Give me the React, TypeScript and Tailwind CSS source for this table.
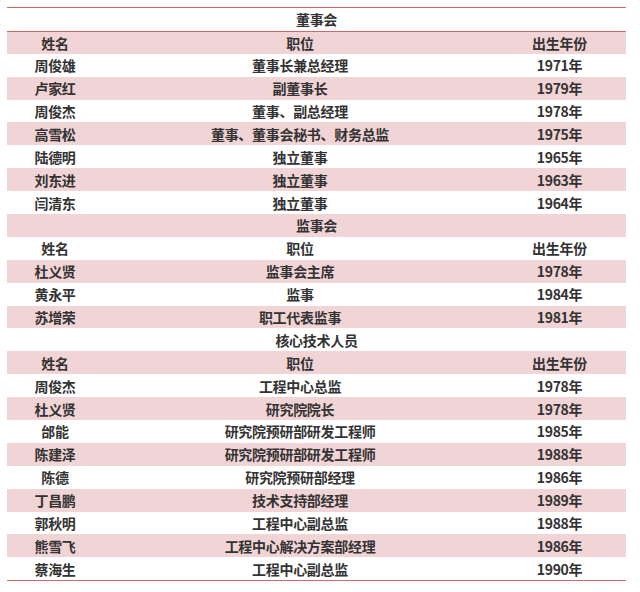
import React from "react";

type Row = { kind: "title"; text: string } | { kind: "header" } | { kind: "data"; name: string; pos: string; year: string };

const rows: Row[] = [
  { kind: "title", text: "董事会" },
  { kind: "header" },
  { kind: "data", name: "周俊雄", pos: "董事长兼总经理", year: "1971年" },
  { kind: "data", name: "卢家红", pos: "副董事长", year: "1979年" },
  { kind: "data", name: "周俊杰", pos: "董事、副总经理", year: "1978年" },
  { kind: "data", name: "高雪松", pos: "董事、董事会秘书、财务总监", year: "1975年" },
  { kind: "data", name: "陆德明", pos: "独立董事", year: "1965年" },
  { kind: "data", name: "刘东进", pos: "独立董事", year: "1963年" },
  { kind: "data", name: "闫清东", pos: "独立董事", year: "1964年" },
  { kind: "title", text: "监事会" },
  { kind: "header" },
  { kind: "data", name: "杜义贤", pos: "监事会主席", year: "1978年" },
  { kind: "data", name: "黄永平", pos: "监事", year: "1984年" },
  { kind: "data", name: "苏增荣", pos: "职工代表监事", year: "1981年" },
  { kind: "title", text: "核心技术人员" },
  { kind: "header" },
  { kind: "data", name: "周俊杰", pos: "工程中心总监", year: "1978年" },
  { kind: "data", name: "杜义贤", pos: "研究院院长", year: "1978年" },
  { kind: "data", name: "邰能", pos: "研究院预研部研发工程师", year: "1985年" },
  { kind: "data", name: "陈建泽", pos: "研究院预研部研发工程师", year: "1988年" },
  { kind: "data", name: "陈德", pos: "研究院预研部经理", year: "1986年" },
  { kind: "data", name: "丁昌鹏", pos: "技术支持部经理", year: "1989年" },
  { kind: "data", name: "郭秋明", pos: "工程中心副总监", year: "1988年" },
  { kind: "data", name: "熊雪飞", pos: "工程中心解决方案部经理", year: "1986年" },
  { kind: "data", name: "蔡海生", pos: "工程中心副总监", year: "1990年" },
];

export default function App() {
  return (
    <div
      className="w-[640px] h-[592px] bg-white pt-[7px] pl-[7px] pr-[14px] text-[14px] text-[#333333]"
      style={{ fontFamily: '"Noto Sans CJK SC", "Noto Sans", sans-serif' }}
    >
      <div className="border-t-[1.5px] border-b-[1.5px] border-[#cf6a6a] flex flex-col">
        {rows.map((r, i) => {
          const bg = i % 2 === 1 ? "bg-[#f1d4d5]" : "bg-white";
          const line = i === 1 ? "border-t-[1.5px] border-[#cf6a6a]" : "";
          if (r.kind === "title") {
            return (
              <div key={i} className={`h-[22.9px] flex items-center justify-center font-bold tracking-[-0.3px] leading-none ${bg} ${line}`}>
                {r.text}
              </div>
            );
          }
          const name = r.kind === "header" ? "姓名" : r.name;
          const pos = r.kind === "header" ? "职位" : r.pos;
          const year = r.kind === "header" ? "出生年份" : r.year;
          return (
            <div key={i} className={`h-[22.9px] grid grid-cols-[96px_394px_1fr] items-center font-bold tracking-[-0.3px] leading-none ${bg} ${line}`}>
              <div className="text-center">{name}</div>
              <div className="text-center">{pos}</div>
              <div className="text-center pr-[4px]">{year}</div>
            </div>
          );
        })}
      </div>
    </div>
  );
}
